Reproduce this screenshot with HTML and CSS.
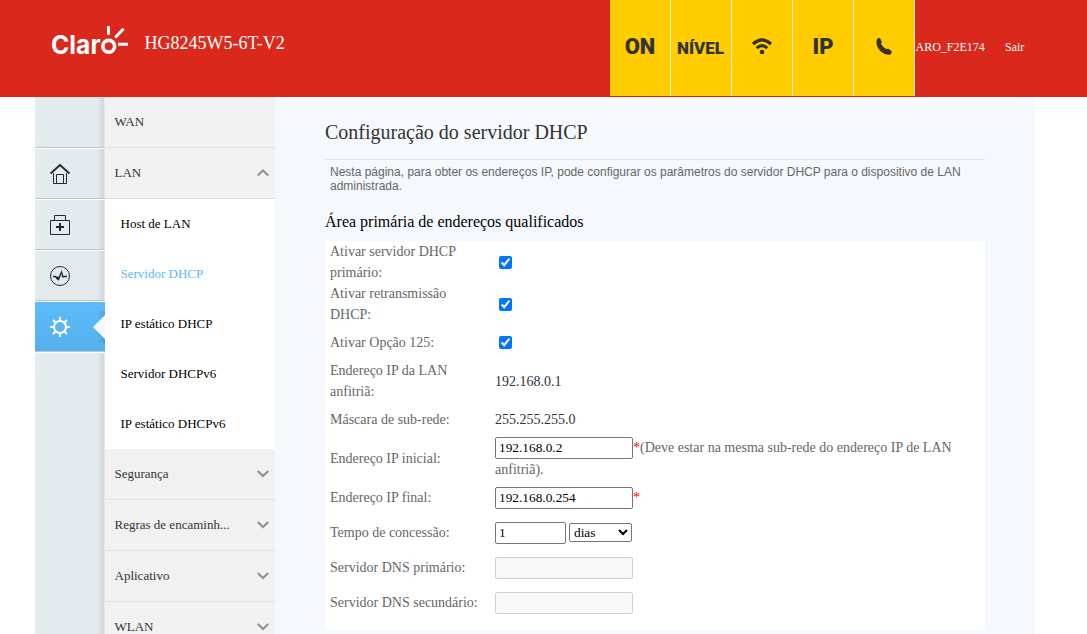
FILE: index.html
```html
<!DOCTYPE html>
<html lang="pt">
<head>
<meta charset="utf-8">
<title>HG8245W5-6T-V2</title>
<link rel="stylesheet" href="styles.css">
</head>
<body>
<header class="header">
  <svg class="logo" width="80" height="34" viewBox="0 0 80 34">
    <g class="logo-text"><text x="0" y="28.500" textLength="49.500" lengthAdjust="spacingAndGlyphs">Clar</text></g>
    <circle cx="57.700" cy="21.300" r="5.900" fill="none" stroke="#fff" stroke-width="3.600"/>
    <path d="M57.500 1v8.700M64.200 12.500l8.300-8.700M67 19.300h10" fill="none" stroke="#fff" stroke-width="3"/>
  </svg>
  <div class="model">HG8245W5-6T-V2</div>
  <div class="status">
    <div class="tile">ON</div>
    <div class="tile level">NÍVEL</div>
    <div class="tile"><svg width="20" height="17" viewBox="0 0 20 17"><g fill="none" stroke="#333" stroke-width="3.200"><path d="M1 6Q10-2.300 19 6"/><path d="M4.700 10.100Q10 5.300 15.300 10.100"/></g><circle cx="10" cy="14" r="2.300" fill="#333"/></svg></div>
    <div class="tile">IP</div>
    <div class="tile phone"><svg width="16" height="17" viewBox="0 0 16 17"><path d="M1.500 1.200 3.600.5 5.300 4.200 4.200 5.700Q6.300 9.800 10.300 11.900L12 11.300 15.300 13.800 14.200 15.800Q10 17 5.500 13.300-.3 8 1.500 1.200Z" fill="#333" stroke="#333" stroke-width="1.200" stroke-linejoin="round"/></svg></div>
  </div>
  <div class="user">ARO_F2E174</div>
  <a class="logout">Sair</a>
</header>
<main class="page">
  <nav class="rail">
    <div class="rail-item first"></div>
    <div class="rail-item"><svg width="20" height="22" viewBox="0 0 20 22" fill="none" stroke="#22292b"><path d="M.5 10.500 10 2 19.500 10.500" stroke-width="1.900"/><path d="M3.500 10v10.500h13V10M6.500 20.500v-9h7v9"/></svg></div>
    <div class="rail-item"><svg width="20" height="22" viewBox="0 0 20 22" fill="none" stroke="#22292b"><path d="M.5 6.500h19v14H.5zM4.500 6.500v-5h11v5"/><path d="M10 9v8M6 13h8" stroke-width="2"/></svg></div>
    <div class="rail-item"><svg width="20" height="22" viewBox="0 0 20 22" fill="none" stroke="#22292b"><circle cx="10" cy="11" r="9.500"/><path d="M3 11.500h2.500l1.500 2 .5-1 1 2 3-7.500 1.500 5 1-.5H17" stroke-width="1.300"/><path d="m6 12 2 2 2-3" stroke-width="1.500"/></svg></div>
    <div class="rail-item active"><svg width="20" height="22" viewBox="0 0 20 22" fill="none" stroke="#fff" stroke-width="2"><circle cx="10" cy="11" r="6"/><path d="M10 1v4M10 17v4M0 11h4M16 11h4M3 4l2.800 2.800M14.200 15.200 17 18M3 18l2.800-2.800M14.200 6.800 17 4"/></svg><svg class="pointer" width="12" height="32" viewBox="0 0 12 32"><defs><linearGradient id="shade"><stop offset="0" stop-color="#4da6df" stop-opacity="0"/><stop offset="1" stop-color="#4da0d6"/></linearGradient></defs><path d="M4 0h8v32H4z" fill="url(#shade)"/><path d="M12 4 0 16l12 12z" fill="#f5f9fe"/></svg></div>
  </nav>
  <nav class="menu">
    <div class="menu-item">WAN</div>
    <div class="menu-item">LAN<svg class="chevron" width="12" height="8" viewBox="0 0 12 8"><path d="M.8 6.500 6 1.500l5.200 5"/></svg></div>
    <div class="submenu">
      <a>Host de LAN</a>
      <a class="current">Servidor DHCP</a>
      <a>IP estático DHCP</a>
      <a>Servidor DHCPv6</a>
      <a>IP estático DHCPv6</a>
    </div>
    <div class="menu-item">Segurança<svg class="chevron" width="12" height="8" viewBox="0 0 12 8"><path d="M.8 1 6 6l5.200-5"/></svg></div>
    <div class="menu-item">Regras de encaminh...<svg class="chevron" width="12" height="8" viewBox="0 0 12 8"><path d="M.8 1 6 6l5.200-5"/></svg></div>
    <div class="menu-item">Aplicativo<svg class="chevron" width="12" height="8" viewBox="0 0 12 8"><path d="M.8 1 6 6l5.200-5"/></svg></div>
    <div class="menu-item">WLAN<svg class="chevron" width="12" height="8" viewBox="0 0 12 8"><path d="M.8 1 6 6l5.200-5"/></svg></div>
  </nav>
  <section class="content">
    <h1 class="title">Configuração do servidor DHCP</h1>
    <p class="intro">Nesta página, para obter os endereços IP, pode configurar os parâmetros do servidor DHCP para o dispositivo de LAN administrada.</p>
    <h2 class="subtitle">Área primária de endereços qualificados</h2>
    <form class="form">
      <div class="row tall"><label>Ativar servidor DHCP primário:</label><div><input class="check" type="checkbox" checked></div></div>
      <div class="row tall"><label>Ativar retransmissão DHCP:</label><div><input class="check" type="checkbox" checked></div></div>
      <div class="row"><label>Ativar Opção 125:</label><div><input class="check single" type="checkbox" checked></div></div>
      <div class="row tall"><label>Endereço IP da LAN anfitriã:</label><div class="value">192.168.0.1</div></div>
      <div class="row"><label>Máscara de sub-rede:</label><div class="value">255.255.255.0</div></div>
      <div class="row start"><label>Endereço IP inicial:</label><div><input class="field" type="text" value="192.168.0.2"><span class="required">*</span>(Deve estar na mesma sub-rede do endereço IP de LAN anfitriã).</div></div>
      <div class="row"><label>Endereço IP final:</label><div><input class="field" type="text" value="192.168.0.254"><span class="required">*</span></div></div>
      <div class="row"><label>Tempo de concessão:</label><div class="lease"><input class="field short" type="text" value="1"><select class="unit"><option>dias</option></select></div></div>
      <div class="row"><label>Servidor DNS primário:</label><div><input class="field" type="text" disabled></div></div>
      <div class="row"><label>Servidor DNS secundário:</label><div><input class="field" type="text" disabled></div></div>
    </form>
  </section>
</main>
</body>
</html>
```
FILE: styles.css
```css
* { box-sizing: border-box; }
body {
  margin: 0;
  height: 634px;
  overflow: hidden;
  background: #fff;
  font-family: "Liberation Serif", "Times New Roman", serif;
}
svg { display: block; flex: none; }
.header {
  display: flex;
  height: 97px;
  background: #da291c;
  color: #fff;
}
.logo { margin: 25px 0 0 51px; overflow: visible; }
.logo-text {
  font: 700 26px Inter, sans-serif;
  fill: #fff;
}
.model { width: 466px; padding-left: 13.5px; font-size: 18px; line-height: 87px; flex: none; }
.status { display: flex; width: 305px; height: 96px; margin-left: auto; }
.tile {
  display: flex;
  align-items: center;
  justify-content: center;
  width: 61px;
  padding-bottom: 4px;
  border-right: 1px solid #f5f0dc;
  background: #ffcd00;
  color: #333;
  font: 900 22px Roboto, sans-serif;
}
.level { padding: 4px 1px 4px 0; font-size: 17px; }
.phone { padding-right: 1px; }
.user { width: 90px; padding-left: .5px; font-size: 12px; line-height: 94px; }
.logout { width: 82px; font-size: 12px; line-height: 94px; }
.page { display: flex; width: 1000px; height: 537px; margin-left: 35px; background: #f5f9fe; }
.rail {
  width: 70px;
  background: linear-gradient(90deg, #e4ebee 0 62px, #d0d7da 69px, #e4e6e8 69px);
}
.rail-item {
  display: flex;
  align-items: center;
  position: relative;
  height: 51px;
  padding-left: 15px;
  border-bottom: 1px solid #fff;
  box-shadow: inset 0 -1px #bfc4c9;
}
.first { height: 52px; }
.active { background: linear-gradient(#5cbcfa, #54b0eb); }
.pointer { position: absolute; right: 0; top: 9px; }
.menu { width: 170px; background: #f1f1f1; font-size: 13px; color: #333; }
.menu-item {
  display: flex;
  align-items: center;
  justify-content: space-between;
  height: 51px;
  padding: 0 6px 0 9.5px;
  border-bottom: 1px solid #e0e1e2;
}
.chevron { fill: none; stroke: #8d929b; stroke-width: 2.2; }
.submenu { height: 250px; background: #fff; color: #000; }
.submenu a { display: block; height: 50px; padding-left: 15.5px; line-height: 50px; }
.submenu .current { color: #5cb8f5; }
.content { width: 760px; padding: 0 50px; }
.title {
  height: 63px;
  margin: 0;
  padding-top: 12px;
  border-bottom: 1px solid #e0e3e6;
  font-size: 20px;
  font-weight: 400;
  line-height: 46px;
  color: #333;
}
.intro {
  margin: 0;
  padding: 5px;
  font: 12px/14px "Liberation Sans", Arial, sans-serif;
  color: #666;
}
.subtitle { margin: 0; padding-top: 12px; height: 43px; font-size: 16px; font-weight: 400; line-height: 24px; color: #000; }
.form { height: 389px; background: #fff; font-size: 14px; line-height: 21px; color: #666; }
.row {
  display: grid;
  grid-template-columns: 155px 1fr;
  column-gap: 10px;
  align-items: center;
  height: 35px;
  padding: 0 5px;
}
.row label { padding-right: 5px; }
.tall { height: 42px; }
.start { height: 43px; }
.value { color: #333; }
.check { display: block; width: 13px; height: 13px; margin: 1px 0 0 4px; }
.single { margin-top: -1px; }
.field {
  width: 138px;
  height: 22px;
  margin: 0;
  padding: 1px 3px;
  border: 1px solid #767676;
  border-radius: 2px;
  background: #fff;
  font: 13.333px "Liberation Serif", serif;
  color: #000;
}
.field:disabled { border-color: #d0d0d0; background: #f8f8f8; }
.required { color: #f00; }
.lease { display: flex; align-items: center; gap: 3px; }
.short { width: 71px; }
.unit {
  width: 63px;
  height: 19px;
  border: 1px solid #767676;
  border-radius: 2px;
  background: #fff;
  font: 13.333px "Liberation Serif", serif;
  color: #000;
}
```
